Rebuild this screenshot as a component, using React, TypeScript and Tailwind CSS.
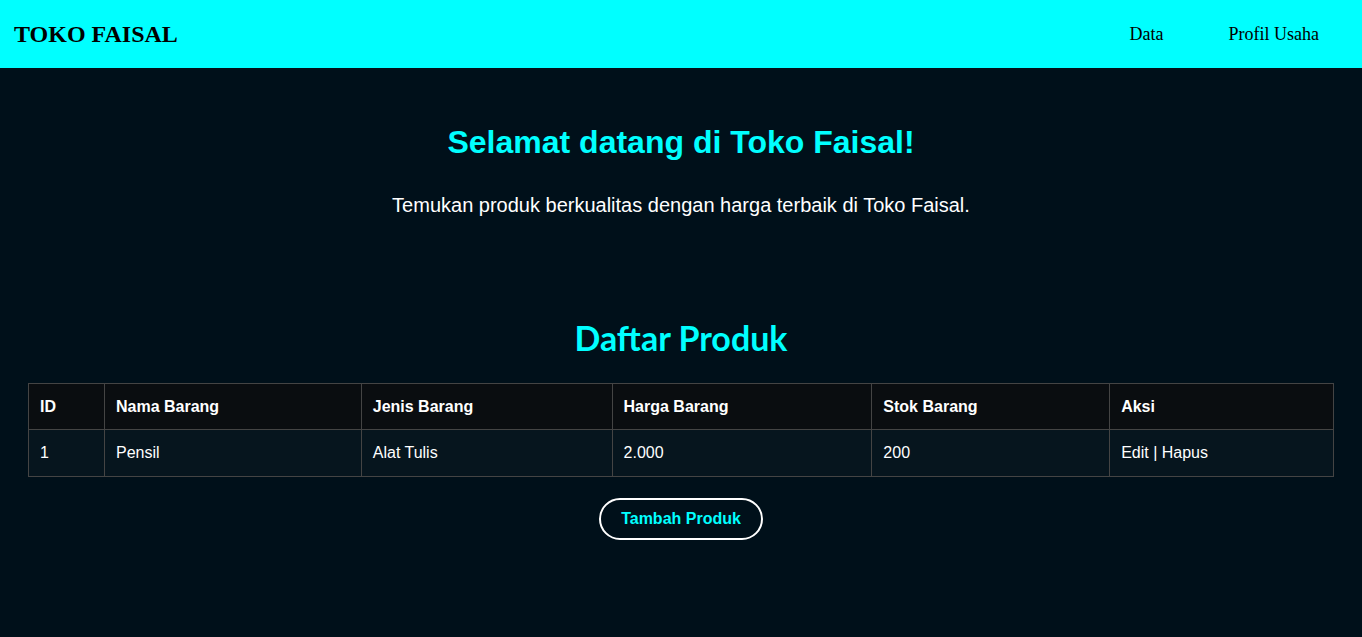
import React from "react";

const cols = [
  { label: "ID", w: "w-[76px]" },
  { label: "Nama Barang", w: "w-[257px]" },
  { label: "Jenis Barang", w: "w-[251px]" },
  { label: "Harga Barang", w: "w-[260px]" },
  { label: "Stok Barang", w: "w-[238px]" },
  { label: "Aksi", w: "w-[224px]" },
];

const row = ["1", "Pensil", "Alat Tulis", "2.000", "200", "Edit | Hapus"];

export default function App() {
  return (
    <div className="min-h-[637px] bg-[#00101a] font-['Liberation_Sans',Arial,sans-serif]">
      <nav className="h-[68px] bg-[#00ffff] flex items-center justify-between pl-[14px] pr-[43px] font-['Liberation_Serif','Times_New_Roman',serif] text-black">
        <div className="text-[24px] font-bold leading-none">TOKO FAISAL</div>
        <div className="flex items-center gap-[65px] text-[18px]">
          <a className="text-black">Data</a>
          <a className="text-black">Profil Usaha</a>
        </div>
      </nav>
      <main className="flex flex-col items-center pt-[56px] px-[28px]">
        <h1 className="text-[32px] font-bold text-[#00ffff] leading-[37px]">Selamat datang di Toko Faisal!</h1>
        <p className="mt-[33px] text-[20px] text-white leading-[23px]">
          Temukan produk berkualitas dengan harga terbaik di Toko Faisal.
        </p>
        <h2 className="mt-[101px] text-[34px] font-bold text-[#00ffff] leading-[40px] font-['Lato','Open_Sans',sans-serif]">
          Daftar Produk
        </h2>
        <table className="mt-[25px] w-full border-collapse text-[16px] text-white">
          <thead>
            <tr className="bg-[#0a0d10] h-[46px]">
              {cols.map((c) => (
                <th key={c.label} className={`${c.w} border border-[#444444] px-[11px] text-left font-bold`}>
                  {c.label}
                </th>
              ))}
            </tr>
          </thead>
          <tbody>
            <tr className="bg-[#06151e] h-[47px]">
              {row.map((v, i) => (
                <td key={i} className="border border-[#444444] px-[11px] text-left">
                  {v}
                </td>
              ))}
            </tr>
          </tbody>
        </table>
        <button className="mt-[21px] h-[42px] w-[164px] rounded-full border-2 border-white text-[#00ffff] font-bold text-[16px] leading-none pb-[1px]">
          Tambah Produk
        </button>
      </main>
    </div>
  );
}
